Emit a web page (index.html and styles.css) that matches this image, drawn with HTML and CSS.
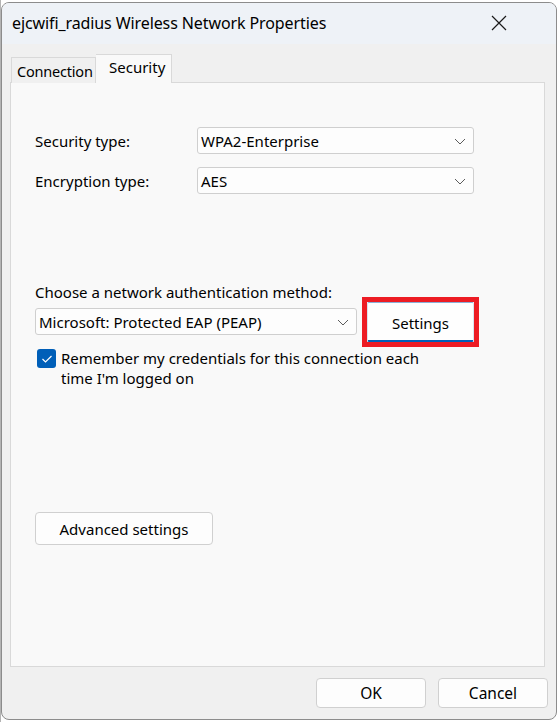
FILE: index.html
```html
<!DOCTYPE html>
<html>
<head>
<meta charset="utf-8">
<link rel="stylesheet" href="styles.css">
</head>
<body>
<div class="window">
  <div class="titlebar">
    <span class="title">ejcwifi_radius Wireless Network Properties</span>
    <svg class="close" width="16" height="16" viewBox="0 0 16 16"><path d="M1 1 L15 15 M15 1 L1 15" stroke="#1a1a1a" stroke-width="1.2" fill="none"/></svg>
  </div>
  <div class="content">
    <div class="tabs">
      <div class="tab">Connection</div>
      <div class="tab active">Security</div>
    </div>
    <div class="panel">
      <div class="row first">
        <span class="label">Security type:</span>
        <div class="select wide"><span>WPA2-Enterprise</span><svg class="chev" width="12" height="7" viewBox="0 0 12 7"><path d="M1 1 L6 6 L11 1" stroke="#5c5c5c" stroke-width="1" fill="none"/></svg></div>
      </div>
      <div class="row">
        <span class="label">Encryption type:</span>
        <div class="select wide"><span>AES</span><svg class="chev" width="12" height="7" viewBox="0 0 12 7"><path d="M1 1 L6 6 L11 1" stroke="#5c5c5c" stroke-width="1" fill="none"/></svg></div>
      </div>
      <div class="choose">Choose a network authentication method:</div>
      <div class="authrow">
        <div class="select auth"><span>Microsoft: Protected EAP (PEAP)</span><svg class="chev" width="12" height="7" viewBox="0 0 12 7"><path d="M1 1 L6 6 L11 1" stroke="#5c5c5c" stroke-width="1" fill="none"/></svg></div>
        <span class="highlight"><button class="btn settings">Settings</button></span>
      </div>
      <div class="check">
        <span class="box"><svg width="12" height="10" viewBox="0 0 12 10"><path d="M1.5 5 L4.5 8 L10.5 2" stroke="#fff" stroke-width="1.2" fill="none"/></svg></span>
        <span class="checktext">Remember my credentials for this connection each<br>time I'm logged on</span>
      </div>
      <button class="btn advanced">Advanced settings</button>
    </div>
    <div class="footer">
      <button class="btn foot">OK</button>
      <button class="btn foot">Cancel</button>
    </div>
  </div>
</div>
</body>
</html>
```

FILE: styles.css
```css
html, body {
  margin: 0;
  padding: 0;
  background: #ffffff;
}
body {
  font-family: "Noto Sans", "Open Sans", sans-serif;
  color: #000;
  font-size: 15px;
  padding: 2px 2px 2px 1px;
  background: linear-gradient(to right, #b4b4b4 0, #b4b4b4 1px, #ffffff 1px);
}
.window {
  width: 556px;
  height: 718px;
  box-sizing: border-box;
  border: 1px solid #8c8c8c;
  border-radius: 8px;
  background: #f0f0f0;
  overflow: hidden;
  display: flex;
  flex-direction: column;
}
.titlebar {
  height: 41px;
  flex: none;
  background: #eef2f7;
  display: flex;
  align-items: center;
  justify-content: space-between;
  padding: 0 49px 0 10px;
}
.title {
  font-size: 16px;
  letter-spacing: -0.1px;
  margin-top: -1px;
}
.close {
  margin-top: -2px;
}
.content {
  flex: 1;
  display: flex;
  flex-direction: column;
  padding: 10px 10px 0 8px;
}
.tabs {
  display: flex;
  align-items: flex-end;
  height: 29px;
  padding-left: 1px;
  position: relative;
  z-index: 1;
  margin-bottom: -1px;
}
.tab {
  box-sizing: border-box;
  height: 26px;
  width: 85px;
  border: 1px solid #d9d9d9;
  border-bottom: none;
  background: #f0f0f0;
  padding: 3px 0 0 5px;
  font-size: 14.5px;
  letter-spacing: -0.2px;
  white-space: nowrap;
  overflow: hidden;
}
.tab.active {
  height: 29px;
  width: 76px;
  background: #f9f9f9;
  border-left: none;
  padding: 2px 0 0 13px;
  font-size: 15px;
  letter-spacing: 0;
}
.panel {
  box-sizing: border-box;
  height: 585px;
  width: 535px;
  background: #f9f9f9;
  border: 1px solid #d9d9d9;
  padding: 0 0 0 24px;
  display: flex;
  flex-direction: column;
  align-items: flex-start;
}
.row {
  display: flex;
  align-items: center;
  margin-top: 13px;
}
.row.first {
  margin-top: 44px;
}
.label {
  width: 162px;
}
.select {
  box-sizing: border-box;
  height: 27px;
  border: 1px solid #cfcfcf;
  border-radius: 3px;
  background: #fdfdfd;
  display: flex;
  align-items: center;
  justify-content: space-between;
  padding: 0 7px 0 3px;
  font-size: 15px;
}
.select.wide {
  width: 277px;
}
.chev {
  margin-top: 1px;
}
.choose {
  margin-top: 88px;
}
.authrow {
  display: flex;
  align-items: flex-start;
  margin-top: -5px;
}
.select.auth {
  width: 322px;
  margin-top: 11px;
  height: 27px;
}
.highlight {
  display: block;
  border: 5px solid #ed1c24;
  margin-left: 5px;
  line-height: 0;
}
.btn {
  font-family: "Noto Sans", "Open Sans", sans-serif;
  font-size: 15px;
  color: #000;
  box-sizing: border-box;
  background: #fdfdfd;
  border: 1px solid #d0d0d0;
  border-radius: 4px;
  padding: 0;
}
.settings {
  width: 107px;
  height: 40px;
  border: 1px solid #d8e3ef;
  border-top-color: #8ab0d8;
  border-bottom: 2px solid #005fb8;
  border-radius: 2px;
  background: #fefefe;
  padding-top: 3px;
  line-height: 20px;
}
.check {
  display: flex;
  align-items: flex-start;
  margin-top: 1px;
  margin-left: 2px;
}
.box {
  width: 19px;
  height: 19px;
  flex: none;
  border-radius: 3px;
  background: #005fb8;
  display: flex;
  align-items: center;
  justify-content: center;
  margin-top: 1px;
}
.checktext {
  margin-left: 5px;
  line-height: 20px;
}
.advanced {
  width: 178px;
  height: 33px;
  margin-top: 124px;
  margin-left: 0;
  font-size: 15px;
}
.footer {
  display: flex;
  justify-content: flex-end;
  gap: 12px;
  padding: 11px 0 0 0;
  margin-right: -2px;
}
.foot {
  width: 110px;
  height: 30px;
  font-size: 15.5px;
}
```
